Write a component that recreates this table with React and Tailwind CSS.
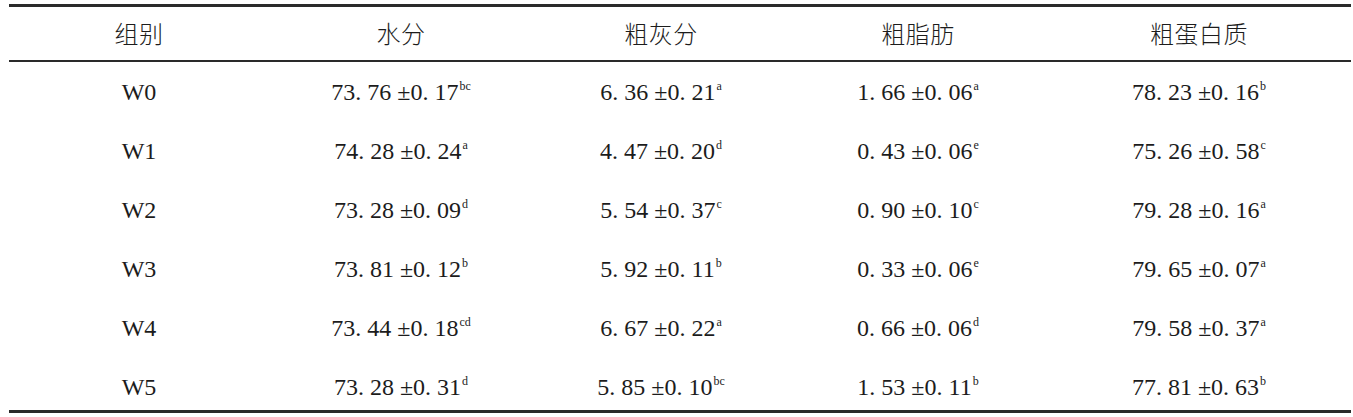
const rows = [
  ["W0", ["73. 76 ±0. 17", "bc"], ["6. 36 ±0. 21", "a"], ["1. 66 ±0. 06", "a"], ["78. 23 ±0. 16", "b"]],
  ["W1", ["74. 28 ±0. 24", "a"], ["4. 47 ±0. 20", "d"], ["0. 43 ±0. 06", "e"], ["75. 26 ±0. 58", "c"]],
  ["W2", ["73. 28 ±0. 09", "d"], ["5. 54 ±0. 37", "c"], ["0. 90 ±0. 10", "c"], ["79. 28 ±0. 16", "a"]],
  ["W3", ["73. 81 ±0. 12", "b"], ["5. 92 ±0. 11", "b"], ["0. 33 ±0. 06", "e"], ["79. 65 ±0. 07", "a"]],
  ["W4", ["73. 44 ±0. 18", "cd"], ["6. 67 ±0. 22", "a"], ["0. 66 ±0. 06", "d"], ["79. 58 ±0. 37", "a"]],
  ["W5", ["73. 28 ±0. 31", "d"], ["5. 85 ±0. 10", "bc"], ["1. 53 ±0. 11", "b"], ["77. 81 ±0. 63", "b"]],
];

const headers = ["组别", "水分", "粗灰分", "粗脂肪", "粗蛋白质"];
const cols = "grid grid-cols-[260px_264px_256px_258px_304px]";

function Value({ value }) {
  return (
    <span>
      {value[0]}
      <sup className="text-[12px] top-[-10px] ml-[1px]">{value[1]}</sup>
    </span>
  );
}

export default function App() {
  return (
    <div className="w-[1353px] h-[417px] bg-white pt-[4px] text-[#1c1c1c] font-['Liberation_Serif','Noto_Sans_CJK_SC',serif]">
      <div className="ml-[9px] w-[1342px]">
        <div className={`${cols} h-[58px] border-t-[3px] border-b-2 border-[#2a2a2a] items-center text-[24px]`}>
          {headers.map((h) => (
            <div key={h} className="text-center font-light tracking-[0.5px] pt-[2px]">
              {h}
            </div>
          ))}
        </div>
        <div className="border-b-[3px] border-[#2a2a2a]">
          {rows.map((r, idx) => (
            <div
              key={r[0]}
              className={`${cols} items-center text-[24px] ${idx === 5 ? "h-[53px] pt-[6px]" : "h-[59px]"}`}
            >
              <div className="text-center">{r[0]}</div>
              {r.slice(1).map((v, i) => (
                <div key={i} className="text-center">
                  <Value value={v} />
                </div>
              ))}
            </div>
          ))}
        </div>
      </div>
    </div>
  );
}
